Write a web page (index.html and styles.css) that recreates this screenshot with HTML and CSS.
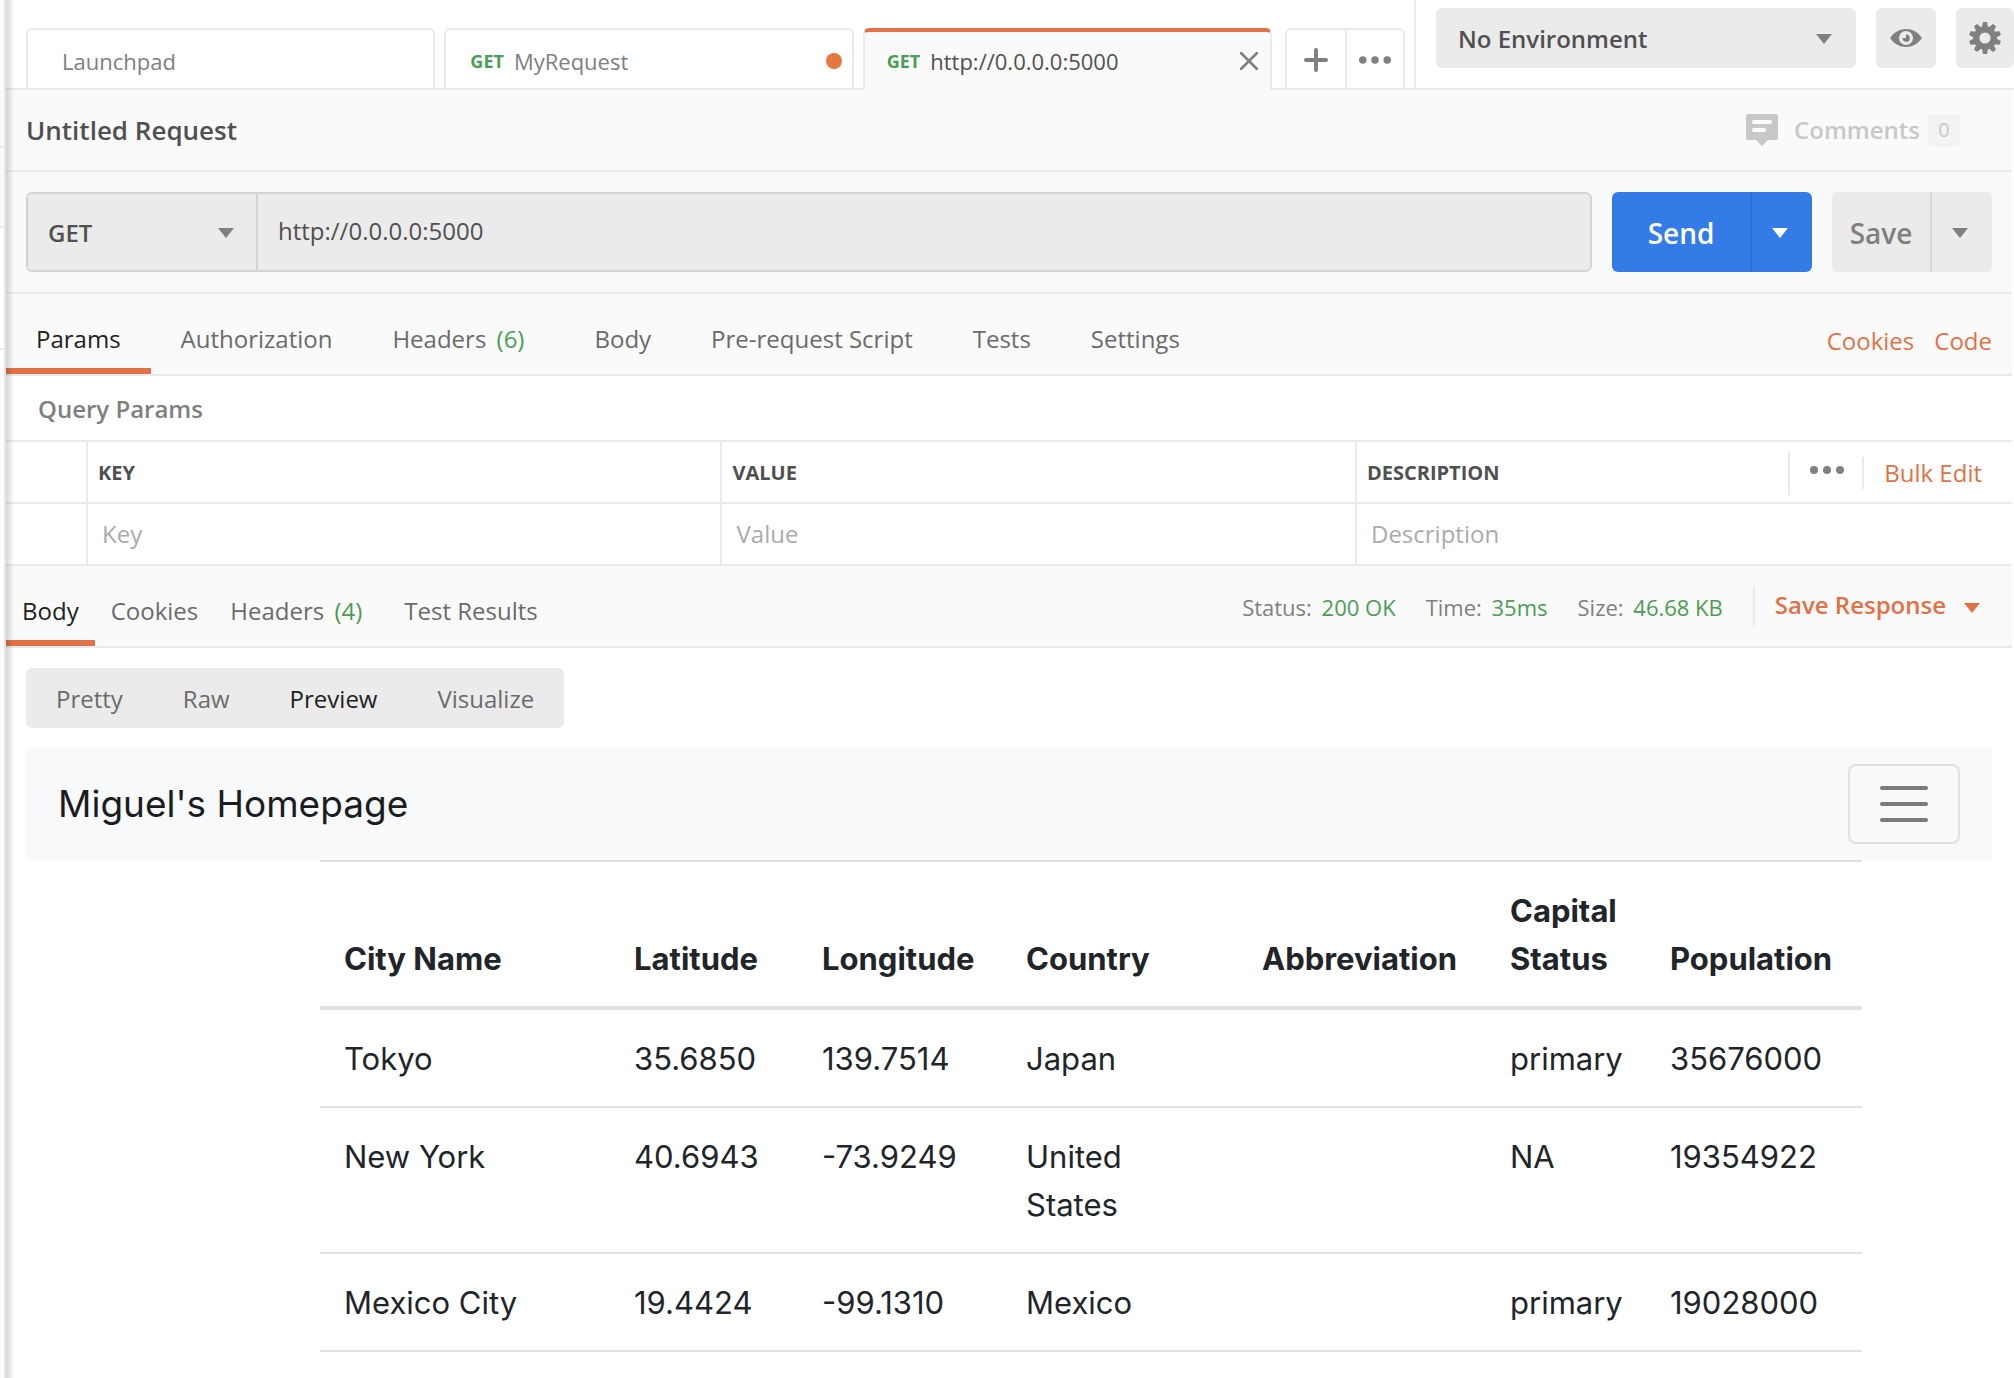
FILE: index.html
```html
<!DOCTYPE html>
<html lang="en">
<head>
<meta charset="utf-8">
<title>http://0.0.0.0:5000</title>
<link rel="stylesheet" href="styles.css">
</head>
<body>
<svg class="defs" aria-hidden="true">
  <symbol id="caret" viewBox="0 0 16 10"><path d="M0 0h16L8 10z"/></symbol>
  <symbol id="dots" viewBox="0 0 34 8"><circle cx="4" cy="4" r="4"/><circle cx="17" cy="4" r="4"/><circle cx="30" cy="4" r="4"/></symbol>
</svg>
<div class="app">
  <aside class="sidebar">
    <div class="sidebar-head"></div>
    <div class="sidebar-tabs"></div>
    <div class="sidebar-row"></div>
  </aside>
  <main class="main">
    <header class="topbar">
      <nav class="tabs" aria-label="Open requests">
        <button class="tab tab-plain"><span class="tab-name">Launchpad</span></button>
        <button class="tab"><span class="verb">GET</span><span class="tab-name">MyRequest</span><span class="unsaved"></span></button>
        <div class="tab tab-active">
          <span class="verb">GET</span><span class="tab-name">http://0.0.0.0:5000</span>
          <button class="close" aria-label="Close tab"><svg width="18" height="18" viewBox="0 0 18 18"><path d="M1 1l16 16M17 1L1 17" fill="none" stroke="#808080" stroke-width="2.6" stroke-linecap="round"/></svg></button>
        </div>
        <div class="tab-actions">
          <button aria-label="New tab"><svg width="24" height="24" viewBox="0 0 24 24"><path d="M12 2v20M2 12h20" fill="none" stroke="#808080" stroke-width="4" stroke-linecap="round"/></svg></button>
          <button aria-label="Tab options"><svg width="32" height="8"><use href="#dots"/></svg></button>
        </div>
      </nav>
      <div class="environment">
        <div class="select env-select">
          <select aria-label="Environment"><option>No Environment</option></select>
          <svg width="16" height="10"><use href="#caret"/></svg>
        </div>
        <button class="icon-button" aria-label="Environment quick look">
          <svg width="32" height="18" viewBox="0 0 32 18"><path d="M0 9C4 3 10 0 16 0s12 3 16 9c-4 6-10 9-16 9S4 15 0 9z" fill="#808080"/><circle cx="16" cy="9" r="7" fill="#ebebeb"/><path d="M16 5.6v3.4h-3.4a3.6 3.6 0 1 0 3.4-3.4z" fill="#808080"/></svg>
        </button>
        <button class="icon-button" aria-label="Settings">
          <svg width="32" height="32" viewBox="-16 -16 32 32" fill="#808080">
            <circle r="8.7" fill="none" stroke="#808080" stroke-width="6.2"/>
            <g id="teeth"><path id="tooth" d="M-2-16h4l1.2 6h-6.4z"/><use href="#tooth" transform="rotate(36)"/><use href="#tooth" transform="rotate(72)"/><use href="#tooth" transform="rotate(108)"/><use href="#tooth" transform="rotate(144)"/></g>
            <use href="#teeth" transform="rotate(180)"/>
          </svg>
        </button>
      </div>
    </header>

    <div class="workspace">
      <section class="request-title">
        <h1>Untitled Request</h1>
        <button class="comments">
          <svg width="32" height="32" viewBox="0 0 32 32"><path d="M2 0h28a2 2 0 0 1 2 2v22a2 2 0 0 1-2 2h-8l-6 6-6-6H2a2 2 0 0 1-2-2V2a2 2 0 0 1 2-2z" fill="#c8c8c8"/><path d="M8 8h16M8 16h10" stroke="#fff" stroke-width="4" stroke-linecap="round"/></svg>
          <span>Comments</span><span class="badge">0</span>
        </button>
      </section>

      <section class="request-line">
        <div class="url-box">
          <div class="select method-select">
            <select aria-label="Method"><option>GET</option></select>
            <svg width="16" height="10"><use href="#caret"/></svg>
          </div>
          <input type="text" aria-label="Request URL" value="http://0.0.0.0:5000">
        </div>
        <div class="split send">
          <button>Send</button>
          <button class="more" aria-label="Send options"><svg width="16" height="10"><use href="#caret"/></svg></button>
        </div>
        <div class="split save">
          <button>Save</button>
          <button class="more" aria-label="Save options"><svg width="16" height="10"><use href="#caret"/></svg></button>
        </div>
      </section>

      <nav class="subtabs" aria-label="Request sections">
        <button class="selected">Params</button>
        <button>Authorization</button>
        <button class="counted">Headers <span class="count">(6)</span></button>
        <button>Body</button>
        <button>Pre-request Script</button>
        <button>Tests</button>
        <button>Settings</button>
        <div class="links"><a href="#cookies">Cookies</a><a href="#code">Code</a></div>
      </nav>

      <section class="params">
        <h2>Query Params</h2>
        <table class="param-table">
          <colgroup><col class="col-check"><col class="col-text"><col class="col-text"><col></colgroup>
          <thead>
            <tr>
              <th></th><th>KEY</th><th>VALUE</th>
              <th>
                <div class="description-head">
                  <span>DESCRIPTION</span>
                  <button class="columns" aria-label="Columns"><svg width="34" height="8"><use href="#dots"/></svg></button>
                  <a class="bulk" href="#bulk">Bulk Edit</a>
                </div>
              </th>
            </tr>
          </thead>
          <tbody>
            <tr>
              <td></td>
              <td><input type="text" aria-label="Key" placeholder="Key"></td>
              <td><input type="text" aria-label="Value" placeholder="Value"></td>
              <td><input type="text" aria-label="Description" placeholder="Description"></td>
            </tr>
          </tbody>
        </table>
      </section>

      <nav class="subtabs response-tabs" aria-label="Response sections">
        <button class="selected">Body</button>
        <button>Cookies</button>
        <button class="counted">Headers <span class="count">(4)</span></button>
        <button>Test Results</button>
        <div class="meta">
          <span>Status: <b>200 OK</b></span>
          <span>Time: <b>35ms</b></span>
          <span>Size: <b>46.68 KB</b></span>
          <button class="save-response">Save Response <svg width="16" height="10"><use href="#caret"/></svg></button>
        </div>
      </nav>
    </div>

    <section class="response">
      <div class="view-modes">
        <button>Pretty</button>
        <button>Raw</button>
        <button class="selected">Preview</button>
        <button>Visualize</button>
      </div>
      <div class="preview">
        <div class="navbar">
          <a class="brand" href="#home">Miguel's Homepage</a>
          <button class="toggler" aria-label="Toggle navigation"><svg width="48" height="36" viewBox="0 0 48 36"><path d="M2 2h44M2 18h44M2 34h44" stroke="#7b7c7d" stroke-width="4" stroke-linecap="round"/></svg></button>
        </div>
        <div class="cities-wrap">
          <table class="cities">
            <colgroup><col class="c-city"><col class="c-lat"><col class="c-long"><col class="c-country"><col class="c-abbr"><col class="c-status"><col></colgroup>
            <thead>
              <tr><th>City Name</th><th>Latitude</th><th>Longitude</th><th>Country</th><th>Abbreviation</th><th>Capital Status</th><th>Population</th></tr>
            </thead>
            <tbody>
              <tr><td>Tokyo</td><td>35.6850</td><td>139.7514</td><td>Japan</td><td></td><td>primary</td><td>35676000</td></tr>
              <tr><td>New York</td><td>40.6943</td><td>-73.9249</td><td>United States</td><td></td><td>NA</td><td>19354922</td></tr>
              <tr><td>Mexico City</td><td>19.4424</td><td>-99.1310</td><td>Mexico</td><td></td><td>primary</td><td>19028000</td></tr>
            </tbody>
          </table>
        </div>
      </div>
    </section>
  </main>
</div>
</body>
</html>
```
FILE: styles.css
```css
* {
  box-sizing: border-box;
}

body {
  margin: 0;
  background: #fff;
  color: #505050;
  font: 24px/32px "Open Sans", "Noto Sans", sans-serif;
}

button,
input,
select {
  margin: 0;
  padding: 0;
  border: 0;
  background: none;
  color: inherit;
  font: inherit;
}

a {
  color: #e27147;
  text-decoration: none;
}

svg {
  display: block;
  flex: none;
}

.defs {
  position: absolute;
  width: 0;
  height: 0;
}

.app {
  display: flex;
  min-height: 100vh;
}

/* Edge of the collapsed sidebar */
.sidebar {
  width: 6px;
  flex: none;
  border-right: 2px solid #e6e6e6;
}

.sidebar div {
  border-bottom: 2px solid #eaeaea;
}

.sidebar-head {
  height: 148px;
  background: #fafafa;
}

.sidebar-tabs {
  height: 80px;
  background: #fafafa;
}

.sidebar-row {
  height: 122px;
}

.main {
  position: relative;
  flex: 1;
  min-width: 0;
}

.main::before {
  content: "";
  position: absolute;
  z-index: 1;
  top: 0;
  bottom: 0;
  left: 0;
  width: 8px;
  background: linear-gradient(to right, rgba(0, 0, 0, 0.16), rgba(0, 0, 0, 0));
  pointer-events: none;
}

/* Top bar */
.topbar {
  display: flex;
  height: 90px;
  border-bottom: 2px solid #eaeaea;
}

.tabs {
  display: flex;
  flex: 1;
  align-items: flex-end;
  gap: 9px;
  min-width: 0;
  padding: 0 9px 0 20px;
}

.tab {
  display: flex;
  flex: 0 1 410px;
  align-items: center;
  gap: 10px;
  height: 60px;
  padding: 4px 10px 0 24px;
  border: 2px solid #eaeaea;
  border-bottom: 0;
  border-radius: 6px 6px 0 0;
  color: #808080;
  font-size: 22px;
  white-space: nowrap;
}

.tab-plain {
  padding-left: 34px;
}

.tab-active {
  height: 62px;
  margin-bottom: -2px;
  padding: 0 10px 0 22px;
  border-top: 4px solid #e27147;
  background: #fafafa;
  color: #505050;
}

.verb {
  color: #4a9d54;
  font-size: 18px;
  font-weight: 700;
}

.unsaved {
  width: 16px;
  height: 16px;
  margin-left: auto;
  border-radius: 50%;
  background: #e5783c;
}

.close {
  margin-left: auto;
  padding: 2px;
}

.tab-actions {
  display: flex;
  height: 60px;
  margin-left: 4px;
  border: 2px solid #eaeaea;
  border-bottom: 0;
  border-radius: 6px 6px 0 0;
}

.tab-actions button {
  display: flex;
  align-items: center;
  justify-content: center;
  width: 58px;
  padding-top: 2px;
  fill: #808080;
}

.tab-actions button + button {
  border-left: 2px solid #eaeaea;
}

.environment {
  display: flex;
  flex: none;
  gap: 20px;
  padding: 8px 0 0 20px;
  border-left: 2px solid #eaeaea;
}

.select {
  display: grid;
  align-items: center;
  fill: #808080;
}

.select select,
.select svg {
  grid-area: 1 / 1;
}

.select svg {
  justify-self: end;
  pointer-events: none;
}

.select select {
  width: 100%;
  height: 100%;
  appearance: none;
  font-weight: 600;
}

.env-select {
  width: 420px;
  height: 60px;
  padding: 2px 24px 0 22px;
  border-radius: 6px;
  background: #ebebeb;
}

.icon-button {
  display: flex;
  align-items: center;
  justify-content: center;
  width: 60px;
  height: 60px;
  border-radius: 6px;
  background: #ebebeb;
}

.icon-button:last-child {
  width: 58px;
}

/* Request */
.workspace {
  margin-right: 2px;
  background: #fafafa;
}

.request-title {
  display: flex;
  align-items: center;
  justify-content: space-between;
  height: 82px;
  padding: 0 52px 0 20px;
  border-bottom: 2px solid #eaeaea;
}

.request-title h1 {
  margin: 0;
  font-size: 26px;
  font-weight: 600;
}

.comments {
  display: flex;
  align-items: center;
  color: #c8c8c8;
  font-weight: 600;
}

.comments span {
  margin-left: 16px;
}

.comments .badge {
  width: 32px;
  height: 32px;
  margin-left: 8px;
  border-radius: 4px;
  background: #f3f3f3;
  font-size: 20px;
  font-weight: 400;
}

.request-line {
  display: flex;
  gap: 20px;
  padding: 20px;
  border-bottom: 2px solid #eaeaea;
}

.url-box {
  display: flex;
  flex: 1;
  height: 80px;
  border: 2px solid #d4d4d4;
  border-radius: 6px;
  background: #ebebeb;
}

.method-select {
  width: 230px;
  padding: 2px 22px 0 20px;
  border-right: 2px solid #d4d4d4;
}

.url-box input {
  flex: 1;
  min-width: 0;
  padding: 0 20px 2px;
}

.split {
  display: flex;
  height: 80px;
  border-radius: 6px;
  font-size: 28px;
  font-weight: 600;
}

.split button {
  flex: 1;
  padding-top: 2px;
}

.split .more {
  display: flex;
  flex: 0 0 62px;
  align-items: center;
  justify-content: center;
  padding: 2px 4px 0 0;
  border-left: 2px solid #d8d8d8;
}

.send {
  width: 200px;
  background: #337ce8;
  color: #fff;
  fill: #fff;
}

.send .more {
  border-color: #2f70d2;
}

.save {
  width: 160px;
  background: #ebebeb;
  color: #808080;
  fill: #808080;
}

.subtabs {
  display: flex;
  height: 82px;
  border-bottom: 2px solid #eaeaea;
  color: #6b6b6b;
}

.subtabs > button {
  padding: 16px 30px 0;
  border-bottom: 6px solid transparent;
  white-space: nowrap;
}

.subtabs > .counted {
  padding-right: 40px;
}

.subtabs > .selected {
  border-bottom-color: #e27147;
  color: #212121;
}

.count {
  margin-left: 4px;
  color: #4a9d54;
}

.links {
  display: flex;
  align-items: center;
  gap: 20px;
  margin-left: auto;
  padding: 14px 20px 0 0;
}

.params {
  background: #fff;
}

.params h2 {
  margin: 0;
  padding: 17px 32px 15px;
  color: #808080;
  font-size: 24px;
  font-weight: 600;
}

.param-table {
  width: 100%;
  border-spacing: 0;
  border-top: 2px solid #eaeaea;
  table-layout: fixed;
}

.col-check {
  width: 82px;
}

.col-text {
  width: 31.63%;
}

.param-table th,
.param-table td {
  height: 62px;
  padding: 0 0 0 10px;
  border-bottom: 2px solid #eaeaea;
  font-size: 20px;
  text-align: left;
}

.param-table th {
  padding-top: 2px;
}

.param-table th:not(:last-child),
.param-table td:not(:last-child) {
  border-right: 2px solid #eaeaea;
}

.param-table input {
  display: block;
  width: 100%;
  height: 60px;
  padding: 0 0 2px 4px;
  font-size: 24px;
}

.param-table input::placeholder {
  color: #ababab;
  opacity: 1;
}

.description-head {
  display: flex;
  align-items: center;
}

.columns {
  display: flex;
  align-items: center;
  height: 44px;
  margin-left: auto;
  padding: 0 18px 6px 20px;
  border-left: 2px solid #eaeaea;
  fill: #808080;
}

.bulk {
  padding: 0 30px 0 20px;
  border-left: 2px solid #eaeaea;
  font-size: 24px;
  font-weight: 400;
}

/* Response */
.response-tabs > button {
  padding-right: 16px;
  padding-left: 16px;
}

.response-tabs > .counted {
  padding-right: 26px;
}

.meta {
  display: flex;
  align-items: center;
  gap: 30px;
  margin-left: auto;
  padding-right: 30px;
  color: #808080;
  font-size: 22px;
  white-space: nowrap;
}

.meta span {
  padding-top: 2px;
}

.meta b {
  margin-left: 4px;
  color: #4a9d54;
  font-weight: 400;
}

.save-response {
  display: flex;
  align-items: center;
  gap: 18px;
  height: 40px;
  padding: 0 2px 2px 20px;
  border-left: 2px solid #eaeaea;
  color: #e27147;
  fill: #e27147;
  font-size: 24px;
  font-weight: 600;
}

.save-response svg {
  margin-top: 6px;
}

.response {
  padding: 20px 22px 24px 20px;
}

.view-modes {
  display: inline-flex;
  gap: 60px;
  height: 60px;
  padding: 2px 30px 0;
  border-radius: 6px;
  background: #ebebeb;
  color: #6b6b6b;
  vertical-align: top;
}

.view-modes .selected {
  color: #212121;
}

.preview {
  margin-top: 20px;
  color: #212529;
  font-family: Inter, "Liberation Sans", sans-serif;
}

.navbar {
  display: flex;
  align-items: center;
  justify-content: space-between;
  padding: 16px 32px;
  background: #f8f9fa;
}

.brand {
  color: #1b1c1d;
  font-size: 37px;
  line-height: 60px;
}

.toggler {
  display: flex;
  align-items: center;
  justify-content: center;
  width: 112px;
  height: 80px;
  border: 2px solid #dfe0e1;
  border-radius: 8px;
}

.cities-wrap {
  padding: 0 130px 0 294px;
}

.cities {
  width: 100%;
  border-spacing: 0;
  border-top: 2px solid #dee2e6;
  font-size: 31px;
  line-height: 48px;
  table-layout: fixed;
}

.cities th,
.cities td {
  padding: 25px 24px 23px;
  border-bottom: 2px solid #dee2e6;
  text-align: left;
  vertical-align: top;
}

.cities th {
  padding-right: 0;
  border-bottom-width: 4px;
  font-weight: 700;
  vertical-align: bottom;
}

.cities th:nth-child(6) {
  padding-right: 24px;
}

.c-city {
  width: 290px;
}

.c-lat {
  width: 188px;
}

.c-long {
  width: 204px;
}

.c-country {
  width: 236px;
}

.c-abbr {
  width: 248px;
}

.c-status {
  width: 160px;
}
```
